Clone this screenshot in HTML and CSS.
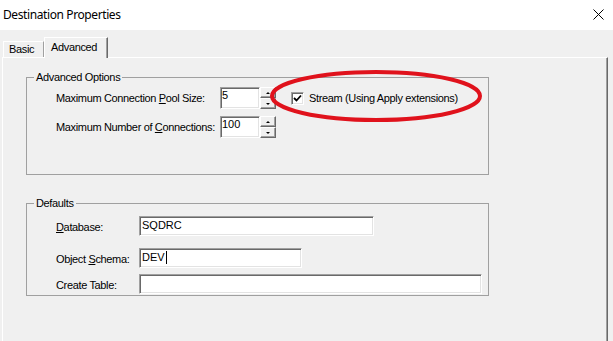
FILE: index.html
```html
<!DOCTYPE html>
<html>
<head>
<meta charset="utf-8">
<title>Destination Properties</title>
<link rel="stylesheet" href="styles.css">
</head>
<body>
<div class="titlebar">
  <span class="title">Destination Properties</span>
  <svg class="close" width="11" height="11" viewBox="0 0 11 11"><path d="M0.5 0.5 L10.5 10.5 M10.5 0.5 L0.5 10.5" stroke="#000" stroke-width="1" fill="none"/></svg>
</div>
<div class="tabs">
  <div class="tab basic">Basic</div>
  <div class="tab active">Advanced</div>
</div>
<div class="panel">
  <fieldset class="group g1">
    <legend>Advanced Options</legend>
    <div class="opt-grid">
      <span class="lbl">Maximum Connection <u>P</u>ool Size:</span>
      <div class="spin">
        <div class="field num">5</div>
        <div class="spin-btns"><span class="sb up"></span><span class="sb down"></span></div>
      </div>
      <div class="check-wrap">
        <span class="checkbox"><svg width="9" height="9" viewBox="0 0 9 9"><path d="M1 4 L3.5 6.5 L8 1.5" stroke="#000" stroke-width="1.8" fill="none"/></svg></span>
        <span>Stream (Using Apply extensions)</span>
      </div>
      <span class="lbl">Maximum Number of <u>C</u>onnections:</span>
      <div class="spin">
        <div class="field num">100</div>
        <div class="spin-btns"><span class="sb up"></span><span class="sb down"></span></div>
      </div>
    </div>
  </fieldset>
  <fieldset class="group g2">
    <legend>Defaults</legend>
    <div class="drow r1"><span class="dlbl"><u>D</u>atabase:</span><div class="field txt w-db">SQDRC</div></div>
    <div class="drow r2"><span class="dlbl">Object <u>S</u>chema:</span><div class="field txt w-os">DEV<span class="caret"></span></div></div>
    <div class="drow r3"><span class="dlbl">Create Table:</span><div class="field txt w-ct"></div></div>
  </fieldset>
  <svg class="annot" width="216" height="58" viewBox="0 0 216 58"><ellipse cx="108" cy="29" rx="104" ry="24" fill="none" stroke="#e0121c" stroke-width="4"/></svg>
</div>
</body>
</html>
```
FILE: styles.css
```css
html, body {
  margin: 0;
  padding: 0;
}
body {
  width: 613px;
  height: 341px;
  overflow: hidden;
  background: #f0f0f0;
  font-family: "Liberation Sans", Arial, sans-serif;
  font-size: 11px;
  line-height: 13px;
  letter-spacing: -0.35px;
  color: #000;
}
.titlebar {
  height: 30px;
  background: #fff;
  display: flex;
  align-items: center;
  justify-content: space-between;
  padding: 0 9px 0 3px;
  box-sizing: border-box;
}
.title {
  font-family: "Noto Sans", "Open Sans", sans-serif;
  font-size: 12px;
  letter-spacing: -0.4px;
  line-height: 16px;
}
.close {
  display: block;
  margin-top: -1px;
}
.tabs {
  height: 27px;
  display: flex;
  align-items: flex-end;
  padding-left: 3px;
  box-sizing: border-box;
}
.tab {
  box-sizing: border-box;
  background: #f0f0f0;
  border-top: 1px solid #fff;
  border-left: 1px solid #fff;
  border-right: 1px solid #a0a0a0;
  line-height: 13px;
}
.tab.basic {
  width: 41px;
  height: 16px;
  padding: 1px 0 0 5px;
}
.tab.active {
  position: relative;
  z-index: 2;
  width: 64px;
  height: 21px;
  margin-bottom: -1px;
  padding: 3px 0 0 6px;
  border-right: 1px solid #696969;
  box-shadow: inset -1px 0 #a0a0a0;
}
.panel {
  position: relative;
  margin-left: 2px;
  width: 606px;
  height: 290px;
  box-sizing: border-box;
  border-top: 1px solid #fff;
  border-left: 1px solid #fff;
  border-right: 1px solid #696969;
  box-shadow: inset -1px 0 #a0a0a0;
  padding: 13px 0 0 23px;
}
.group {
  margin: 0;
  width: 463px;
  box-sizing: border-box;
  border: 1px solid #a0a0a0;
  min-inline-size: 0;
}
.group legend {
  padding: 0 2px;
  margin-left: -22px;
  line-height: 13px;
}
.g1 {
  padding: 3px 0 36px 29px;
}
.opt-grid {
  display: grid;
  grid-template-columns: 164px 56px auto;
  grid-auto-rows: 22px;
  row-gap: 7px;
  align-items: center;
}
.spin {
  display: flex;
  height: 22px;
}
.field {
  box-sizing: border-box;
  background: #fff;
  border-top: 1px solid #a0a0a0;
  border-left: 1px solid #a0a0a0;
  border-bottom: 1px solid #fff;
  border-right: 1px solid #fff;
  box-shadow: inset 1px 1px #696969, inset -1px -1px #e3e3e3;
  white-space: nowrap;
  letter-spacing: 0;
}
.field.num {
  width: 40px;
  height: 22px;
  padding: 1px 0 0 1px;
}
.spin-btns {
  display: flex;
  flex-direction: column;
  width: 16px;
}
.sb {
  position: relative;
  height: 11px;
  box-sizing: border-box;
  background: #f0f0f0;
  border-top: 1px solid #fff;
  border-left: 1px solid #fff;
  border-right: 1px solid #696969;
  border-bottom: 1px solid #696969;
  box-shadow: inset -1px -1px #a0a0a0;
  display: flex;
  align-items: center;
  justify-content: center;
}
.sb::after {
  content: "";
  width: 0;
  height: 0;
  border-left: 2px solid transparent;
  border-right: 2px solid transparent;
}
.sb.up::after {
  border-bottom: 2px solid #000;
}
.sb.down::after {
  border-top: 2px solid #000;
}
.check-wrap {
  display: flex;
  align-items: center;
  gap: 5px;
  margin-left: 15px;
  white-space: nowrap;
}
.checkbox {
  width: 13px;
  height: 13px;
  box-sizing: border-box;
  background: #fff;
  border-top: 1px solid #a0a0a0;
  border-left: 1px solid #a0a0a0;
  border-bottom: 1px solid #fff;
  border-right: 1px solid #fff;
  box-shadow: inset 1px 1px #696969, inset -1px -1px #e3e3e3;
  display: flex;
  align-items: center;
  justify-content: center;
}
.checkbox svg {
  display: block;
}
.g2 {
  margin-top: 22px;
  padding: 6px 0 1px 29px;
}
.drow {
  display: flex;
  align-items: center;
}
.drow.r2 {
  margin-top: 12px;
}
.drow.r3 {
  margin-top: 6px;
}
.dlbl {
  width: 83px;
  flex: none;
  padding-top: 2px;
}
.field.txt {
  height: 20px;
  padding: 2px 0 0 2px;
}
.w-db { width: 235px; }
.w-os { width: 163px; }
.w-ct { width: 343px; }
.caret {
  display: inline-block;
  width: 1px;
  height: 13px;
  background: #000;
  vertical-align: top;
  margin-left: 1px;
}
.annot {
  position: absolute;
  left: 265px;
  top: 9px;
  pointer-events: none;
}
```
